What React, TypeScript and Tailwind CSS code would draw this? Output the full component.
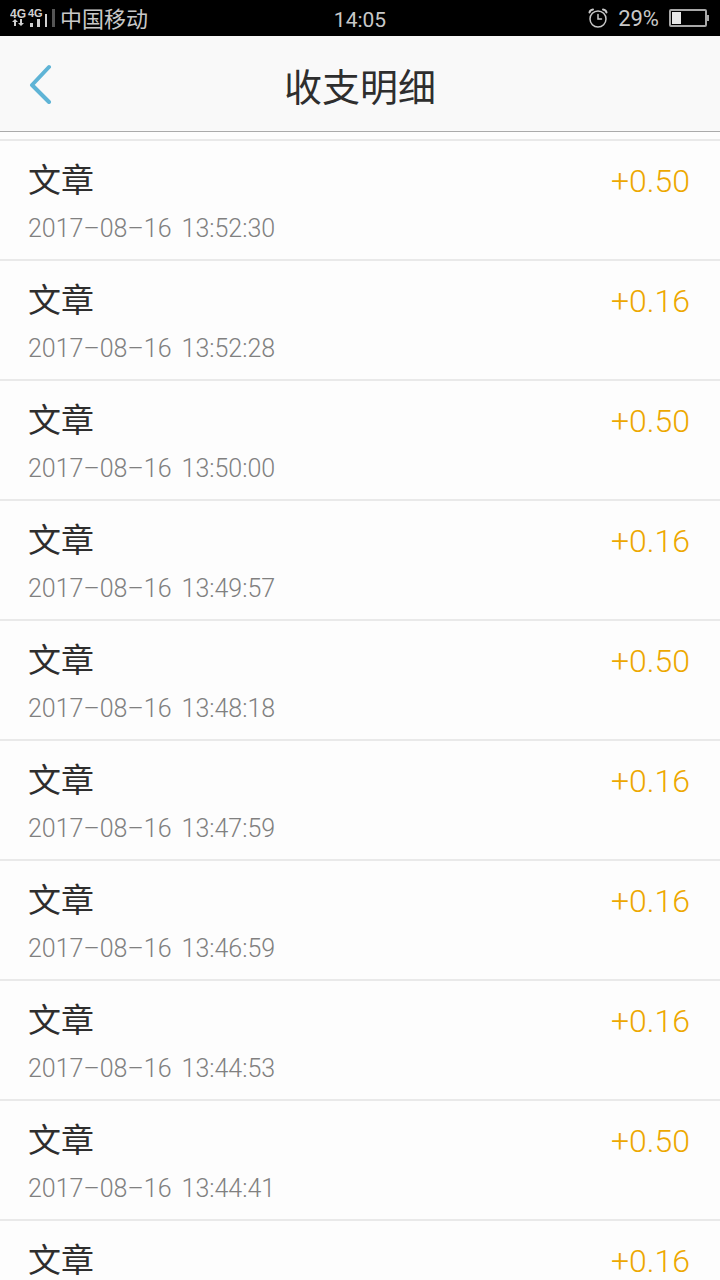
import React from 'react';

interface Entry {
  id: number;
  title: string;
  date?: string;
  time?: string;
  amount: number;
}

const entries: Entry[] = [
  { id: 1, title: '文章', date: '2017–08–16', time: '13:52:30', amount: 0.5 },
  { id: 2, title: '文章', date: '2017–08–16', time: '13:52:28', amount: 0.16 },
  { id: 3, title: '文章', date: '2017–08–16', time: '13:50:00', amount: 0.5 },
  { id: 4, title: '文章', date: '2017–08–16', time: '13:49:57', amount: 0.16 },
  { id: 5, title: '文章', date: '2017–08–16', time: '13:48:18', amount: 0.5 },
  { id: 6, title: '文章', date: '2017–08–16', time: '13:47:59', amount: 0.16 },
  { id: 7, title: '文章', date: '2017–08–16', time: '13:46:59', amount: 0.16 },
  { id: 8, title: '文章', date: '2017–08–16', time: '13:44:53', amount: 0.16 },
  { id: 9, title: '文章', date: '2017–08–16', time: '13:44:41', amount: 0.5 },
  { id: 10, title: '文章', amount: 0.16 },
];

const SignalIcon = () => (
  <svg width="46" height="24" viewBox="0 0 46 24" aria-hidden="true">
    <g fill="#d0d0d0" fontFamily="Liberation Sans, sans-serif" fontWeight="bold">
      <text x="0" y="12" fontSize="12">4G</text>
      <text x="18" y="11" fontSize="11">4G</text>
    </g>
    <g fill="#d0d0d0">
      <path d="M5 13l3 3H6v4H4v-4H2z" />
      <path d="M11 20l3-3h-2v-4h-2v4H8z" />
      <rect x="20" y="17" width="3" height="4" />
      <rect x="27" y="13" width="3" height="8" />
      <rect x="35" y="8" width="2" height="13" />
    </g>
    <rect x="42" y="3" width="3" height="18" fill="#555" />
  </svg>
);

const AlarmIcon = () => (
  <svg
    width="20"
    height="20"
    viewBox="0 0 20 20"
    fill="none"
    stroke="#c8c8c8"
    strokeWidth="1.500"
    strokeLinecap="round"
    aria-hidden="true"
  >
    <circle cx="10" cy="11" r="8" />
    <path d="M10 6.500V11h3.500" />
    <path d="M1.500 4.500Q2 2 5 1.500M18.500 4.500Q18 2 15 1.500" strokeWidth="2" />
  </svg>
);

const BatteryIcon = () => (
  <svg width="41" height="18" viewBox="0 0 41 18" aria-hidden="true">
    <rect x="1" y="1" width="36" height="16" rx="1" fill="none" stroke="#a8a8a8" strokeWidth="2" />
    <rect x="3" y="3" width="9" height="12" fill="#e8e8e8" />
    <rect x="38" y="6" width="2" height="6" fill="#a8a8a8" />
  </svg>
);

const StatusBar = () => (
  <div className="grid h-9 shrink-0 grid-cols-3 items-center bg-black px-2.5 text-[21px] leading-6 text-[#c8c8c8]">
    <div className="flex items-center gap-1">
      <SignalIcon />
      <span className="pt-1 text-[22px]">中国移动</span>
    </div>
    <span className="pt-1 text-center">14:05</span>
    <div className="flex items-center justify-end gap-2.5">
      <AlarmIcon />
      <span className="pt-0.5 text-[22px]">29%</span>
      <BatteryIcon />
    </div>
  </div>
);

const Header = () => (
  <header className="grid h-24 shrink-0 grid-cols-[1fr_auto_1fr] items-center border-b border-[#aaaaaa] bg-[#f9f9f9] px-7">
    <button type="button" aria-label="返回" className="justify-self-start">
      <svg
        width="26"
        height="40"
        viewBox="0 0 26 40"
        fill="none"
        stroke="#5fb4d6"
        strokeWidth="4"
        strokeLinecap="round"
        strokeLinejoin="round"
      >
        <path d="M21 3L4 21l17 17" />
      </svg>
    </button>
    <h1 className="pt-2 text-[38px] leading-12 text-[#2e2e2e]">收支明细</h1>
  </header>
);

const EntryRow: React.FC<{ entry: Entry }> = ({ entry }) => (
  <li className="flex h-30 items-start justify-between border-b-2 border-[#e9e9e9] pt-4 pr-[30px] pl-7">
    <div>
      <p className="text-[33px] leading-12 text-[#2e2e2e]">{entry.title}</p>
      {entry.date && (
        <p className="flex gap-2.5 text-[25px] leading-12 font-light text-[#808080]">
          <span>{entry.date}</span>
          <span>{entry.time}</span>
        </p>
      )}
    </div>
    <span className="text-[32px] leading-12 font-light text-[#eda800]">+{entry.amount.toFixed(2)}</span>
  </li>
);

const App = () => {
  return (
    <div className="flex h-screen flex-col overflow-hidden bg-[#fdfdfd] font-['Roboto','Noto_Sans_CJK_SC',sans-serif]">
      <StatusBar />
      <Header />
      <main className="flex-1 overflow-y-auto pt-[7px] [scrollbar-width:none]">
        <ul className="border-t-2 border-[#e9e9e9]">
          {entries.map((entry) => (
            <EntryRow key={entry.id} entry={entry} />
          ))}
        </ul>
      </main>
    </div>
  );
};

export default App;
